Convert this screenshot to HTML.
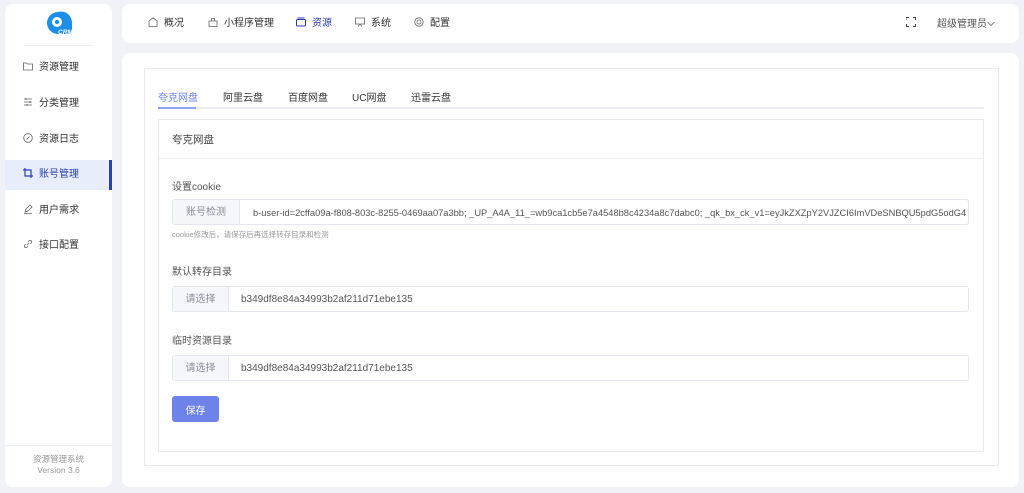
<!DOCTYPE html>
<html><head><meta charset="utf-8"><style>
*{margin:0;padding:0;box-sizing:border-box}
body{width:1024px;height:493px;background:#f0f2f7;font-family:"Liberation Sans","Noto Sans CJK SC",sans-serif;font-size:10px;color:#333;position:relative;overflow:hidden}
.abs{position:absolute}
.card{background:#fff;border-radius:8px}
.side .it{position:absolute;left:5px;width:107px;height:30px;line-height:30px;padding-left:18px;font-size:10px;color:#333}
.side .it svg{vertical-align:-1px;margin-right:6px}
.active{background:#e8edfb;border-right:3px solid #2a3fb0}
.nav span{position:absolute;top:13px;line-height:14px;font-size:10px;color:#333}
.nav svg{vertical-align:-1px;margin-right:6px}
.inp{position:absolute;left:172px;width:797px;height:26px;border:1px solid #e4e7ed;border-radius:3px;display:flex;font-size:10px;line-height:12px}
.inp .pre{background:#f5f7fa;color:#8a8f99;border-right:1px solid #e4e7ed;display:flex;align-items:center;justify-content:center;padding-top:2px}
.inp .v{display:flex;align-items:center;padding-left:12px;color:#555;white-space:nowrap;overflow:hidden;padding-top:1px}
.lbl{position:absolute;left:172px;font-size:10px;line-height:12px;color:#555}
.tab{position:absolute;top:93px;font-size:10px;line-height:12px}
</style></head><body>
<div class="abs card side" style="left:5px;top:4px;width:107px;height:483px"></div>
<div class="side">
<svg class="abs" style="left:45px;top:11px" width="28" height="27" viewBox="0 0 28 27"><path d="M13 1a11 11 0 1 0 0 22h10a4 4 0 0 0 4-4v-7A11 11 0 0 0 13 1z" fill="#1e8fe8"/><circle cx="12" cy="11" r="5" fill="#fff"/><circle cx="12" cy="11" r="2.2" fill="#1e8fe8"/><text x="13" y="23" font-size="6.5" font-weight="bold" fill="#fff" font-style="italic" font-family="Liberation Sans">CRM</text></svg>
<div class="abs" style="left:25px;top:45px;width:68px;height:1px;background:#eef0f4"></div>
<div class="it" style="top:53px"><svg width="10" height="10" viewBox="0 0 10 10" fill="none" stroke="#666" stroke-width=".8"><path d="M.5 2h3l1 1h5v6H.5z"/></svg>资源管理</div>
<div class="it" style="top:89px"><svg width="10" height="10" viewBox="0 0 10 10" fill="none" stroke="#666" stroke-width=".8"><path d="M1 2h8M1 5h8M1 8h8M3 1v2M7 4v2M4 7v2"/></svg>分类管理</div>
<div class="it" style="top:125px"><svg width="10" height="10" viewBox="0 0 10 10" fill="none" stroke="#666" stroke-width=".8"><circle cx="5" cy="5" r="4.3"/><path d="M3.5 6.5l3-3"/></svg>资源日志</div>
<div class="it active" style="top:160px;color:#2a3fb0"><svg width="10" height="10" viewBox="0 0 10 10" fill="none" stroke="#2a3fb0" stroke-width="1.2"><path d="M2 0v8h8M0 2h8v8"/></svg>账号管理</div>
<div class="it" style="top:196px"><svg width="10" height="10" viewBox="0 0 10 10" fill="none" stroke="#666" stroke-width=".8"><path d="M2 8l1-3 4-4 2 2-4 4zM1 9.5h8"/></svg>用户需求</div>
<div class="it" style="top:231px"><svg width="10" height="10" viewBox="0 0 10 10" fill="none" stroke="#666" stroke-width=".8"><path d="M4 6l2-2M3 5L1.5 6.5a1.5 1.5 0 0 0 2 2L5 7M7 5l1.5-1.5a1.5 1.5 0 0 0-2-2L5 3"/></svg>接口配置</div>
<div class="abs" style="left:5px;top:445px;width:107px;height:1px;background:#f0f1f4"></div>
<div class="abs" style="left:5px;top:454px;width:107px;text-align:center;font-size:8.5px;color:#999;line-height:11px">资源管理系统<br>Version 3.6</div>
</div>
<div class="abs card nav" style="left:122px;top:4px;width:897px;height:39px">
<span style="left:26px"><svg width="10" height="10" viewBox="0 0 10 10" fill="none" stroke="#666" stroke-width=".8"><path d="M1 9.5V4L5 .8 9 4v5.5z"/></svg>概况</span>
<span style="left:86px"><svg width="10" height="10" viewBox="0 0 10 10" fill="none" stroke="#666" stroke-width=".8"><path d="M1 4h8v5.5H1zM3.5 4V1.5h3V4"/></svg>小程序管理</span>
<span style="left:174px;color:#2a3fb0"><svg width="10" height="10" viewBox="0 0 10 10" fill="none" stroke="#2a3fb0" stroke-width="1"><rect x=".5" y="2.5" width="9" height="6.5" rx="1"/><path d="M1.5 1h7"/></svg>资源</span>
<span style="left:233px"><svg width="10" height="10" viewBox="0 0 10 10" fill="none" stroke="#666" stroke-width=".8"><path d="M.5 1h9v6h-9zM3 9.5l2-2.5 2 2.5"/></svg>系统</span>
<span style="left:292px"><svg width="10" height="10" viewBox="0 0 10 10" fill="none" stroke="#666" stroke-width=".8"><circle cx="5" cy="5" r="4.2"/><circle cx="5" cy="5" r="2"/></svg>配置</span>
<svg class="abs" style="left:784px;top:13px" width="10" height="10" viewBox="0 0 10 10" fill="none" stroke="#444" stroke-width="1"><path d="M0 3V.5h3M7 .5h2.5V3M9.5 7v2.5H7M3 9.5H.5V7"/></svg>
<span style="left:815px;color:#555;top:14px">超级管理员<svg width="8" height="6" viewBox="0 0 8 6" style="margin:0;vertical-align:0" fill="none" stroke="#666" stroke-width=".8"><path d="M.5 1l3.5 3.5L7.5 1"/></svg></span>
</div>
<div class="abs card" style="left:122px;top:53px;width:897px;height:434px"></div>
<div class="abs" style="left:144px;top:68px;width:855px;height:398px;border:1px solid #e8eaef"></div>
<div class="abs" style="left:158px;top:107px;width:826px;height:2px;background:#eceef3"></div>
<div class="abs" style="left:158px;top:107px;width:38px;height:2px;background:#8fa2f0"></div>
<div class="tab" style="left:158px;color:#6d83ea">夸克网盘</div>
<div class="tab" style="left:223px">阿里云盘</div>
<div class="tab" style="left:288px">百度网盘</div>
<div class="tab" style="left:352px">UC网盘</div>
<div class="tab" style="left:411px">迅雷云盘</div>
<div class="abs" style="left:158px;top:119px;width:826px;height:333px;border:1px solid #e8eaef"></div>
<div class="abs" style="left:159px;top:158px;width:824px;height:1px;background:#eceef3"></div>
<div class="abs" style="left:172px;top:134px;font-size:10.5px;line-height:13px;color:#444">夸克网盘</div>
<div class="lbl" style="top:182px">设置cookie</div>
<div class="inp" style="top:199px"><div class="pre" style="width:67px">账号检测</div><div class="v" style="font-size:9.3px;padding-left:13px">b-user-id=2cffa09a-f808-803c-8255-0469aa07a3bb; _UP_A4A_11_=wb9ca1cb5e7a4548b8c4234a8c7dabc0; _qk_bx_ck_v1=eyJkZXZpY2VJZCI6ImVDeSNBQU5pdG5odG4</div></div>
<div class="abs" style="left:172px;top:230px;font-size:7.5px;line-height:10px;color:#999">cookie修改后，请保存后再选择转存目录和检测</div>
<div class="lbl" style="top:267px">默认转存目录</div>
<div class="inp" style="top:286px"><div class="pre" style="width:56px">请选择</div><div class="v">b349df8e84a34993b2af211d71ebe135</div></div>
<div class="lbl" style="top:336px">临时资源目录</div>
<div class="inp" style="top:355px"><div class="pre" style="width:56px">请选择</div><div class="v">b349df8e84a34993b2af211d71ebe135</div></div>
<div class="abs" style="left:172px;top:396px;width:47px;height:26px;background:#6d83ea;border-radius:3px;color:#fff;display:flex;align-items:center;justify-content:center;font-size:10px">保存</div>
</body></html>
